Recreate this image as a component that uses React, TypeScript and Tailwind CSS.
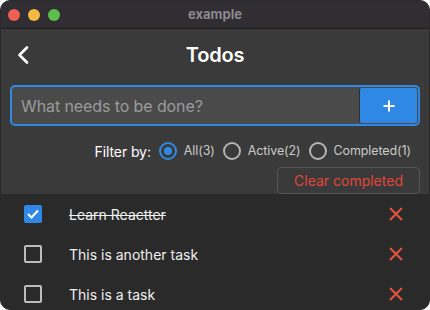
import { useState } from 'react';

type Todo = { id: number; text: string; done: boolean };

const initialTodos: Todo[] = [
  { id: 1, text: 'Learn Reactter', done: true },
  { id: 2, text: 'This is another task', done: false },
  { id: 3, text: 'This is a task', done: false },
];

function Radio({ checked }: { checked: boolean }) {
  return checked ? (
    <span className="w-[18px] h-[18px] rounded-full border-2 border-[#2f88e3] flex items-center justify-center">
      <span className="w-[8px] h-[8px] rounded-full bg-[#2f88e3]" />
    </span>
  ) : (
    <span className="w-[18px] h-[18px] rounded-full border-2 border-[#b4b4b4]" />
  );
}

export default function App() {
  const [todos, setTodos] = useState<Todo[]>(initialTodos);
  const [filter, setFilter] = useState('all');

  const active = todos.filter((t) => !t.done).length;
  const completed = todos.length - active;

  const filters = [
    { key: 'all', label: `All(${todos.length})` },
    { key: 'active', label: `Active(${active})` },
    { key: 'completed', label: `Completed(${completed})` },
  ];

  return (
    <div className="w-[430px] h-[310px] bg-white font-['Inter',sans-serif]">
      <div className="h-full flex flex-col rounded-[10px] overflow-hidden border border-[#2a2a2a] bg-[#3a3a3a]">
        {/* title bar */}
        <div className="h-[28px] shrink-0 grid grid-cols-[1fr_auto_1fr] items-center bg-[#302e33] border-b border-[#1c1c1c]">
          <div className="flex items-center gap-[8px] pl-[7px]">
            <span className="w-[12px] h-[12px] rounded-full bg-[#ec5f55]" />
            <span className="w-[12px] h-[12px] rounded-full bg-[#f4b843]" />
            <span className="w-[12px] h-[12px] rounded-full bg-[#5bbf4b]" />
          </div>
          <span className="text-[13px] font-bold text-[#8b888e]">example</span>
          <div />
        </div>

        {/* nav */}
        <div className="h-[52px] shrink-0 grid grid-cols-[1fr_auto_1fr] items-center">
          <button className="pl-[15px] text-white">
            <svg width="14" height="18" viewBox="0 0 14 18" fill="none">
              <path d="M11 1.5L3.5 9L11 16.5" stroke="white" strokeWidth="2.6" strokeLinecap="round" strokeLinejoin="round" />
            </svg>
          </button>
          <h1 className="text-[20px] font-semibold text-white tracking-[-0.2px]">Todos</h1>
          <div />
        </div>

        {/* input */}
        <div className="px-[9px] pt-[4px]">
          <div className="h-[41px] flex border-2 border-[#2f88e3] rounded-[5px] bg-[#4a4a4a] overflow-hidden">
            <input
              placeholder="What needs to be done?"
              className="flex-1 min-w-0 bg-transparent pl-[9px] text-[16px] tracking-[-0.1px] text-white placeholder:text-[#9b9b9b] outline-none"
            />
            <button className="w-[58px] my-[1px] mr-[1px] bg-[#2f88e3] border-l border-[#2d2d2d] rounded-[2px] flex items-center justify-center">
              <svg width="12" height="12" viewBox="0 0 12 12">
                <path d="M6 0.5V11.5M0.5 6H11.5" stroke="white" strokeWidth="2" />
              </svg>
            </button>
          </div>
        </div>

        {/* filter */}
        <div className="mt-[15px] h-[20px] flex items-center justify-end pr-[18px] text-[12.5px] tracking-[-0.1px] text-[#c9c9c9]">
          <span className="text-[14px] text-white mr-[8px]">Filter by:</span>
          {filters.map((f, i) => (
            <label
              key={f.key}
              onClick={() => setFilter(f.key)}
              className={i < filters.length - 1 ? 'flex items-center gap-[7px] mr-[8px] cursor-pointer' : 'flex items-center gap-[7px] cursor-pointer'}
            >
              <Radio checked={filter === f.key} />
              <span>{f.label}</span>
            </label>
          ))}
        </div>

        {/* clear */}
        <div className="mt-[6px] flex justify-end pr-[9px]">
          <button
            onClick={() => setTodos(todos.filter((t) => !t.done))}
            className="w-[143px] h-[27px] border border-[#555555] rounded-[4px] text-[14px] text-[#e0463b]"
          >
            Clear completed
          </button>
        </div>

        {/* list */}
        <div className="flex-1 bg-[#2a2a2a]">
          {todos.map((t) => (
            <div key={t.id} className="h-[40px] flex items-center pl-[23px] pr-[26px]">
              <button
                onClick={() => setTodos(todos.map((x) => (x.id === t.id ? { ...x, done: !x.done } : x)))}
                className={t.done ? 'w-[18px] h-[18px] rounded-[2px] bg-[#2f88e3] flex items-center justify-center' : 'w-[18px] h-[18px] rounded-[2px] border-2 border-[#bdbdbd]'}
              >
                {t.done && (
                  <svg width="12" height="10" viewBox="0 0 12 10" fill="none">
                    <path d="M1 5L4.5 8.5L11 1.5" stroke="white" strokeWidth="2" />
                  </svg>
                )}
              </button>
              <span className={t.done ? 'ml-[27px] flex-1 text-[14px] text-[#f0f0f0] line-through' : 'ml-[27px] flex-1 text-[14px] text-[#f0f0f0]'}>
                {t.text}
              </span>
              <button onClick={() => setTodos(todos.filter((x) => x.id !== t.id))}>
                <svg width="14" height="14" viewBox="0 0 14 14">
                  <path d="M1 1L13 13M13 1L1 13" stroke="#e5533f" strokeWidth="2" />
                </svg>
              </button>
            </div>
          ))}
        </div>
      </div>
    </div>
  );
}
